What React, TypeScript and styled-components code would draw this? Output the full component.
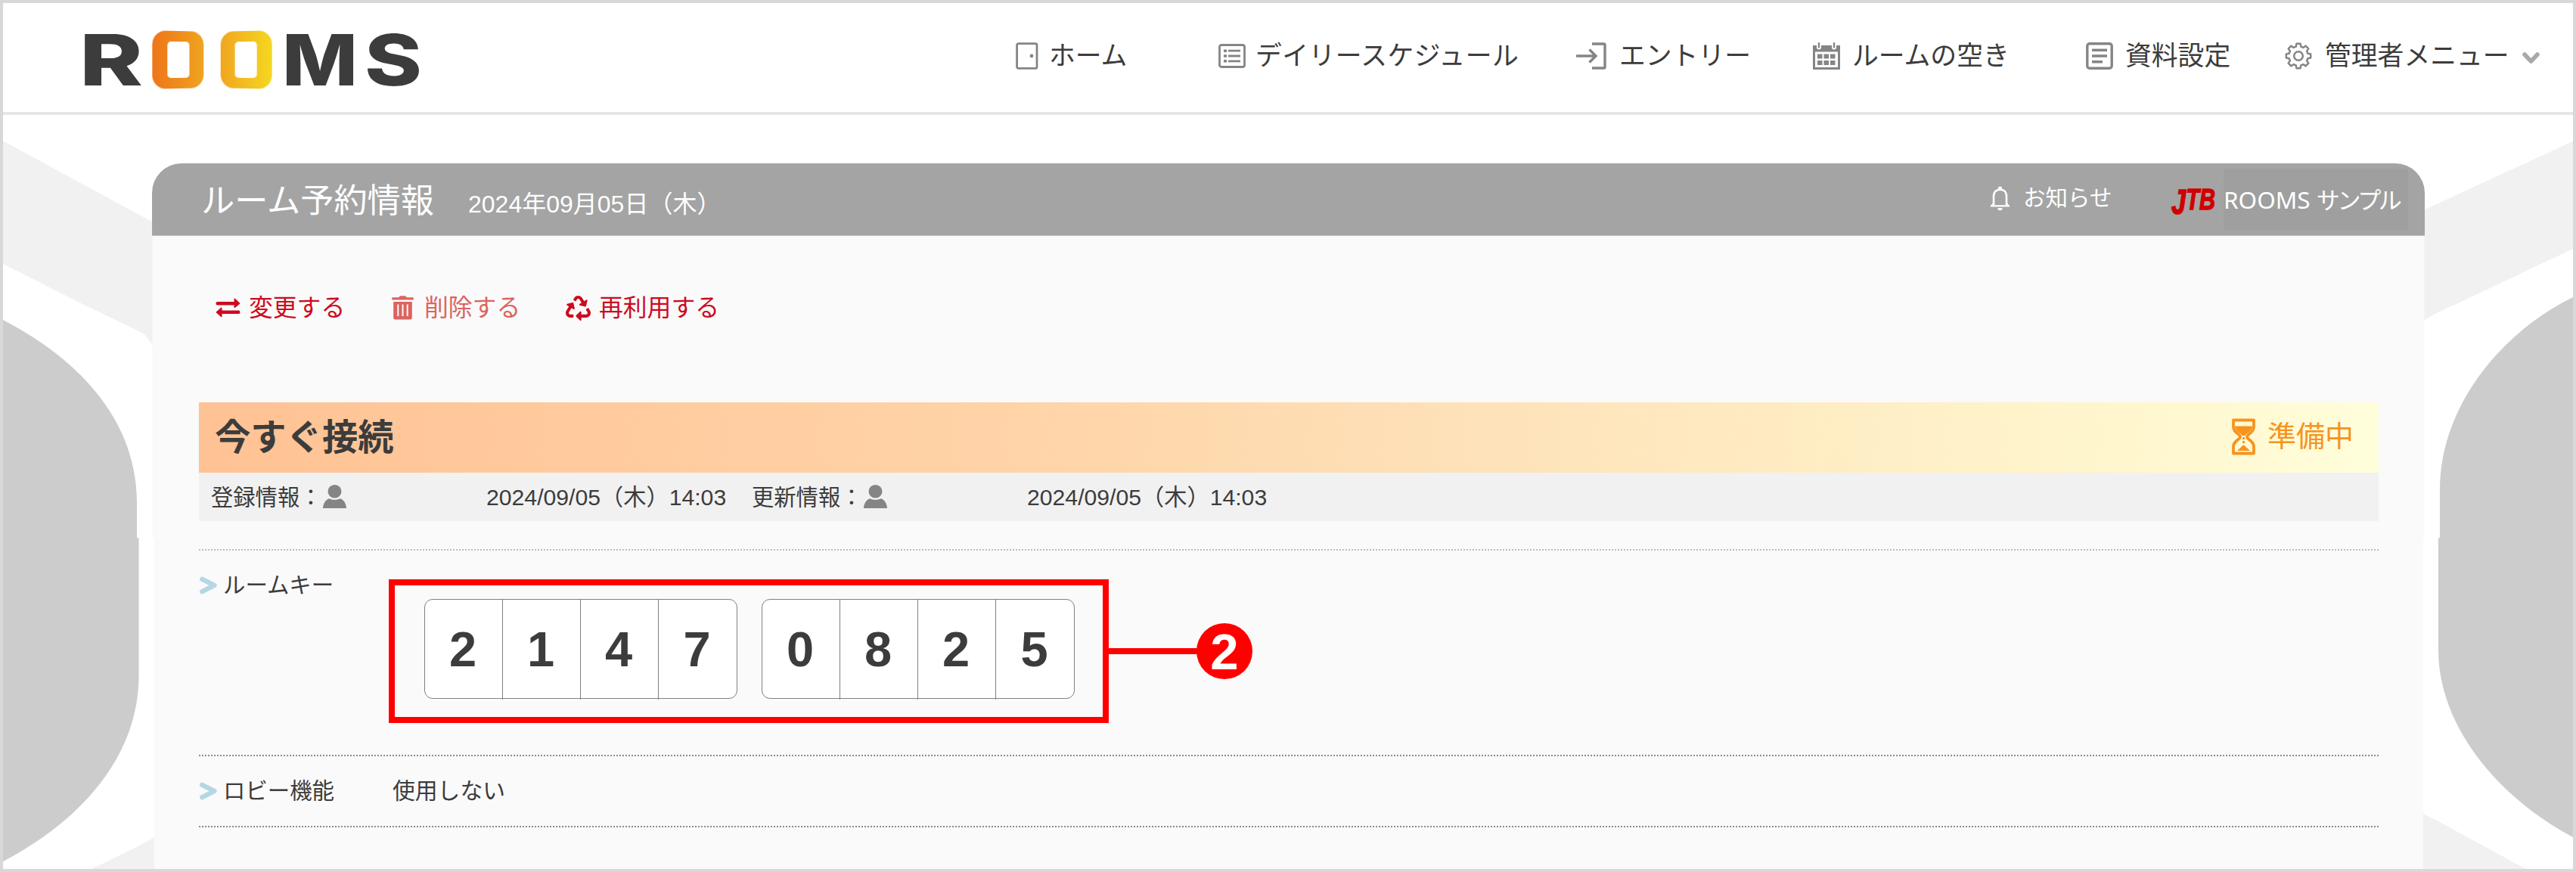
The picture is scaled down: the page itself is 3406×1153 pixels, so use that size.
import React from "react";
import styled, { createGlobalStyle } from "styled-components";
import { FaRecycle } from "react-icons/fa";

const Global = createGlobalStyle`
  *, *::before, *::after { box-sizing: border-box; }
  body {
    margin: 0;
    background: #fff;
    color: #3c3c3c;
    font-family: "Liberation Sans", "Noto Sans CJK JP", sans-serif;
  }
  svg { display: block; flex: none; }
`;

const Page = styled.div`
  position: relative;
  width: 3406px;
  height: 1153px;
  overflow: hidden;
  border: 4px solid #d8d8d8;
  background: #fff;
`;

const Backdrop = styled.svg`
  position: absolute;
  top: -4px;
  left: -4px;
`;

const Header = styled.header`
  position: relative;
  display: flex;
  align-items: center;
  height: 148px;
  padding: 0 0 0 107px;
  border-bottom: 4px solid #e6e6e6;
  background: #fff;
`;

const Logo = styled.div`
  display: flex;
  align-items: center;
  width: 450px;
  height: 80px;
  margin-top: 5px;
`;

const LogoType = styled.svg<{ $ml?: number }>`
  margin-left: ${(p) => p.$ml ?? 0}px;
  overflow: visible;
  font-family: "Inter", "Roboto", sans-serif;
  font-weight: 800;
  fill: #3c3c3c;
`;

const LogoDoor = styled.span<{ $from: string; $to: string; $ml: number; $tilt: number }>`
  flex: none;
  display: flex;
  width: 70px;
  height: 76px;
  margin-left: ${(p) => p.$ml}px;
  padding: 14px 20px;
  border-radius: 18px;
  background: linear-gradient(90deg, ${(p) => p.$from}, ${(p) => p.$to});
  transform: perspective(420px) rotateY(${(p) => p.$tilt}deg);

  &::after {
    content: "";
    flex: 1;
    border-radius: 5px;
    background: #fff;
  }
`;

const Nav = styled.nav`
  display: grid;
  grid-template-columns: 268px 473px 313px 361px 263px 360px;
  margin: 0 0 5px 782px;
`;

const NavLink = styled.a<{ $gap: number; $spacing?: number }>`
  display: flex;
  align-items: center;
  gap: ${(p) => p.$gap}px;
  height: 44px;
  font-size: 34.8px;
  letter-spacing: ${(p) => p.$spacing ?? 0}px;
  line-height: 44px;
  white-space: nowrap;
`;

const MenuArrow = styled.svg`
  margin-top: 6px;
`;

const Panel = styled.main`
  position: relative;
  width: 3005px;
  height: 933px;
  margin: 64px 0 0 197px;
`;

const PanelHead = styled.div`
  display: flex;
  align-items: center;
  height: 96px;
  padding-left: 65px;
  border-bottom: 1px solid #c4c4c4;
  border-radius: 39px 39px 0 0;
  background: #a4a4a4;
  color: #fff;
`;

const PanelTitle = styled.h1`
  width: 353px;
  margin: 0;
  padding-top: 4px;
  font-size: 44.2px;
  font-weight: 400;
  line-height: 60px;
  white-space: nowrap;
`;

const PanelDate = styled.span`
  padding-top: 13px;
  font-size: 32px;
  line-height: 44px;
  white-space: nowrap;
`;

const Notice = styled.a`
  display: flex;
  align-items: center;
  gap: 16px;
  width: 239px;
  margin-left: auto;
  padding-bottom: 3px;
  font-size: 29.5px;
  line-height: 40px;
`;

const Account = styled.a`
  display: flex;
  align-items: center;
  gap: 9px;
  margin-right: 22px;
`;

const AccountName = styled.span`
  width: 244px;
  height: 82px;
  background: #9f9f9f;
  font-family: "Noto Sans", "Noto Sans CJK JP", sans-serif;
  font-size: 31.5px;
  line-height: 79px;
  white-space: nowrap;
`;

const Kana = styled.span`
  font-family: "Noto Sans CJK JP", sans-serif;
  font-size: 31px;
  letter-spacing: -3.4px;
`;

const JtbLogo = styled.svg`
  overflow: visible;
  font-family: "Liberation Sans", sans-serif;
  font-style: italic;
  font-weight: 700;
  fill: #d00000;
  stroke: #d00000;
  stroke-width: 1.5px;
`;

const PanelBody = styled.div`
  padding: 72px 61px 0 62px;
`;

const Actions = styled.div`
  display: flex;
  align-items: center;
  height: 46px;
  padding-left: 22px;
`;

const Action = styled.a<{ $color: string; $gap: number; $width: number }>`
  display: flex;
  align-items: center;
  gap: ${(p) => p.$gap}px;
  width: ${(p) => p.$width}px;
  color: ${(p) => p.$color};
  font-size: 31.8px;
  line-height: 46px;
  white-space: nowrap;
`;

const MeetingBar = styled.div`
  display: flex;
  align-items: center;
  justify-content: space-between;
  height: 93px;
  margin-top: 102px;
  padding: 0 33px 0 21px;
  background: linear-gradient(92deg, #ffc294 0%, #ffd5a9 40%, #fee0b7 56%, #fff6cd 88%, #fffedb 100%);
`;

const MeetingTitle = styled.h2`
  margin: 0;
  font-size: 47.3px;
  font-weight: 700;
  line-height: 60px;
`;

const Status = styled.div`
  display: flex;
  align-items: center;
  gap: 16px;
  padding-bottom: 3px;
  color: #f7931e;
  font-size: 38px;
  line-height: 50px;
`;

const Meta = styled.div`
  display: flex;
  align-items: center;
  height: 64px;
  margin-bottom: 37px;
  padding: 1px 0 0 16px;
  background: #f1f1f1;
  font-size: 30.2px;
  line-height: 40px;
  white-space: nowrap;
`;

const MetaItem = styled.span<{ $width: number }>`
  display: flex;
  align-items: center;
  width: ${(p) => p.$width}px;
`;

const MetaLabel = styled.span`
  width: 148px;
  font-size: 29.3px;
`;

const MetaPerson = styled.span`
  width: 216px;
  padding-bottom: 3px;
`;

const Row = styled.section<{ $height: number; $line: string }>`
  display: flex;
  height: ${(p) => p.$height}px;
  border-top: 2px dotted ${(p) => p.$line};
`;

const RowLabel = styled.div`
  display: flex;
  align-items: center;
  gap: 8px;
  width: 256px;
  height: 44px;
  margin-top: 24px;
  padding-left: 1px;
  font-size: 29.4px;
  line-height: 44px;
  white-space: nowrap;
`;

const RowValue = styled.div`
  margin-top: 24px;
  font-size: 29.8px;
  line-height: 44px;
`;

const Callout = styled.div`
  display: flex;
  align-items: center;
  height: 190px;
  margin: 38px 0 0 -5px;
`;

const CalloutFrame = styled.div`
  display: flex;
  gap: 32px;
  width: 952px;
  height: 190px;
  padding: 18px 0 0 38.5px;
  border: 8px solid #f00;
`;

const CalloutLine = styled.span`
  width: 118px;
  height: 8px;
  background: #f00;
`;

const CalloutNumber = styled.span`
  width: 74px;
  height: 74px;
  margin-left: -2px;
  border-radius: 50%;
  background: #f00;
  color: #fff;
  font-size: 67px;
  font-weight: 700;
  line-height: 75px;
  text-align: center;
`;

const KeyGroup = styled.div`
  display: grid;
  grid-template-columns: repeat(4, 1fr);
  width: 414px;
  height: 132px;
  border: 1.5px solid #808080;
  border-radius: 11px;
  background: #fff;
`;

const KeyDigit = styled.span`
  padding-right: 1px;
  color: #3c3c3c;
  font-size: 65px;
  font-weight: 700;
  line-height: 132px;
  text-align: center;

  &:not(:last-child) { border-right: 1px solid #808080; }
`;

const DoorIcon = () => (
  <svg width="30" height="36" viewBox="0 0 30 36" fill="none" stroke="#858585" strokeWidth="2.8">
    <rect x="1.6" y="1.6" width="26.4" height="32.8" rx="2" />
    <circle cx="21" cy="18" r="2.4" fill="#858585" stroke="none" />
  </svg>
);

const ListIcon = () => (
  <svg width="36" height="32" viewBox="0 0 36 32" fill="none" stroke="#858585" strokeWidth="2.8">
    <rect x="1.5" y="1.5" width="33" height="29" rx="2.5" />
    <path d="M13 9.2h16M13 16h16M13 22.8h16" />
    <path d="M7 9.2h4M7 16h4M7 22.8h4" strokeWidth="3.4" />
  </svg>
);

const EnterIcon = () => (
  <svg width="40" height="36" viewBox="0 0 40 36" fill="none" stroke="#858585" strokeWidth="3.4">
    <path d="M21 2h15.5q1.5 0 1.5 1.5v29q0 1.500-1.500 1.500H21" />
    <path d="M0 18h25M17.500 9.500 26 18l-8.500 8.500" />
  </svg>
);

const CalendarIcon = () => (
  <svg width="36" height="36" viewBox="0 0 36 36" fill="#858585">
    <path d="M0 4h5v2.500a3 3 0 0 0 6 0V4h14v2.500a3 3 0 0 0 6 0V4h5v32H0zM3 12.500V33h30V12.500z" fillRule="evenodd" />
    <rect x="6.800" y="0" width="2.400" height="7.500" rx="1.200" />
    <rect x="26.800" y="0" width="2.400" height="7.500" rx="1.200" />
    {[6, 14.5, 23].map((x) =>
      [15.5, 24].map((y) => <rect key={`${x}-${y}`} x={x} y={y} width="6.500" height="6" />)
    )}
  </svg>
);

const DocumentIcon = () => (
  <svg width="36" height="36" viewBox="0 0 36 36" fill="none" stroke="#858585" strokeWidth="3.4">
    <rect x="1.800" y="1.800" width="32.400" height="32.400" rx="3" />
    <path d="M8 10.200h20M8 18h20M8 25.800h14" />
  </svg>
);

const gearPoints = () => {
  const teeth = 8;
  const pts: string[] = [];
  for (let i = 0; i < teeth; i++) {
    const base = (i * 360) / teeth - 90;
    const corners: [number, number][] = [
      [-15, 12.8],
      [-9, 16.4],
      [9, 16.4],
      [15, 12.8],
    ];
    corners.forEach(([a, r]) => {
      const t = ((base + a) * Math.PI) / 180;
      pts.push(`${(18 + r * Math.cos(t)).toFixed(2)},${(18 + r * Math.sin(t)).toFixed(2)}`);
    });
  }
  return pts.join(" ");
};

const GearIcon = () => (
  <svg width="36" height="36" viewBox="0 0 36 36" fill="none" stroke="#858585" strokeWidth="2.500" strokeLinejoin="round">
    <polygon points={gearPoints()} />
    <circle cx="18" cy="18" r="5.800" />
  </svg>
);

const ChevronDown = () => (
  <MenuArrow width="23" height="16" viewBox="0 0 23 16" fill="none" stroke="#a9a9a9" strokeWidth="5.500">
    <path d="M3 3 11.500 12 20 3" strokeLinecap="round" strokeLinejoin="round" />
  </MenuArrow>
);

const BellIcon = () => (
  <svg width="28" height="33" viewBox="0 0 28 33">
    <path d="M5 25V13.500C5 7.500 9 4.600 13.500 4.600s8.500 2.900 8.500 8.900V25" fill="none" stroke="#fff" strokeWidth="2.600" />
    <path d="M3.700 22.500 1 27h3zM23.300 22.500 26 27h-3z" fill="#fff" />
    <path d="M1 25.200h25v2.200H1z" fill="#fff" />
    <circle cx="13.500" cy="3" r="2.600" fill="#fff" />
    <path d="M10.300 29h6.400a3.200 3.200 0 0 1-6.400 0z" fill="#fff" />
  </svg>
);

const JtbMark = () => (
  <JtbLogo width="61" height="48" viewBox="0 0 61 48">
    <text x="1" y="43" textLength="58" lengthAdjust="spacingAndGlyphs">
      <tspan fontSize="46">J</tspan>
      <tspan fontSize="39" dy="-6">TB</tspan>
    </text>
  </JtbLogo>
);

const SwapIcon = () => (
  <svg width="33" height="26" viewBox="0 0 33 26" fill="currentColor">
    <path d="M2 5h22.500V1.500q0-1.500 1.300-.8l6.200 5.700q.8.700 0 1.400l-6.200 5.100q-1.300.7-1.300-.8V9.400H2Q.500 9.200.500 7.200T2 5z" />
    <path d="M31 16.600H8.500v-3.100q0-1.500-1.300-.8L1 18.200q-.8.700 0 1.400l6.200 5.500q1.300.7 1.300-.8V21H31q1.500-.2 1.500-2.200T31 16.600z" />
  </svg>
);

const TrashIcon = () => (
  <svg width="29" height="32" viewBox="0 0 29 32" fill="currentColor">
    <path d="M1 2.200h8.500Q9.800.3 11.500.3h6q1.700 0 2 1.900H28q.8 0 .8 1v1.500q0 .8-.8.800H1q-.8 0-.8-.8V3.200q0-1 .8-1z" />
    <path fillRule="evenodd" d="M2.200 8h24.600v21q0 2.500-2.500 2.500H4.700q-2.500 0-2.500-2.500zM7.300 11.500V27h2V11.500zM13.500 11.500V27h2V11.500zM19.700 11.500V27h2V11.500z" />
  </svg>
);

const HourglassIcon = () => (
  <svg width="31" height="49" viewBox="0 0 31 49" fill="none" stroke="#f7931e" strokeWidth="3.800">
    <path d="M2 2.500h27v9c0 8-9 9-9 13s9 5 9 13v9H2v-9c0-8 9-9 9-13s-9-5-9-13z" strokeLinejoin="round" />
    <path d="M4 10.500h23c0 8-8.500 8.500-9.500 12.500h-4C12.500 19 4 18.500 4 10.500zM15.500 35l8.500 8H7z" fill="#f7931e" stroke="none" />
    <path d="M15.500 25v10" strokeWidth="2.800" strokeDasharray="3 2" />
  </svg>
);

const PersonIcon = () => (
  <svg width="31" height="31" viewBox="0 0 31 31" fill="#858585">
    <ellipse cx="15.500" cy="8.800" rx="9" ry="8.800" />
    <path d="M0 31c.5-7 3.500-11 8-12.800q7 3.600 15 0C27.500 20 30.500 24 31 31z" />
  </svg>
);

const RowArrow = () => (
  <svg width="23" height="24" viewBox="0 0 23 24" fill="none" stroke="#b5d7e3" strokeWidth="6.400" strokeLinecap="round" strokeLinejoin="round">
    <path d="M3.300 3.800 19.500 12 3.300 20.200" />
  </svg>
);

const navItems = [
  { label: "ホーム", icon: <DoorIcon />, gap: 14 },
  { label: "デイリースケジュール", icon: <ListIcon />, gap: 13, spacing: 0.45 },
  { label: "エントリー", icon: <EnterIcon />, gap: 17 },
  { label: "ルームの空き", icon: <CalendarIcon />, gap: 16 },
  { label: "資料設定", icon: <DocumentIcon />, gap: 16 },
  { label: "管理者メニュー", icon: <GearIcon />, gap: 17, menu: true },
];

const keyGroups = ["2147", "0825"];

export default function App() {
  return (
    <>
      <Global />
      <Page>
        <Backdrop width="3406" height="1153" viewBox="0 0 3406 1153">
          <g fill="#f1f1f1">
            <path d="M0 184 230 309V472L201 455 190 441 105 400 0 347z" />
            <path d="M3406 185 3180 289V440L3206 423Q3225 411 3250 401L3406 327z" />
            <path d="M113 1153 160 1130Q190 1116 230 1092V1153z" />
            <path d="M3180 1062Q3205 1077 3222 1085L3347 1153H3180z" />
          </g>
          <g fill="#ccc">
            <path d="M0 421C100 472 181 552 181 666V711H0z" />
            <path d="M0 711H183.500V893C183.500 1005 100 1090 0 1141z" />
            <path d="M3406 391C3310 436 3226 536 3226 647V711H3406z" />
            <path d="M3406 711H3224V859C3224 965 3310 1060 3406 1109z" />
          </g>
          <path d="M201.500 262H3205.500V711H3204V1153H204V711H201.500z" fill="#fafafa" />
        </Backdrop>

        <Header>
          <Logo>
            <LogoType width="76" height="70">
              <text x="-6" y="69" fontSize="94" textLength="84" lengthAdjust="spacingAndGlyphs">R</text>
            </LogoType>
            <LogoDoor $from="#ee7519" $to="#f0a41f" $ml={14} $tilt={14} />
            <LogoDoor $from="#f1a520" $to="#f5d720" $ml={19} $tilt={-14} />
            <LogoType width="176" height="70" $ml={20}>
              <text x="-7" y="69" fontSize="94" textLength="100" lengthAdjust="spacingAndGlyphs">M</text>
              <text x="102" y="69" fontSize="94" textLength="76" lengthAdjust="spacingAndGlyphs">S</text>
            </LogoType>
          </Logo>
          <Nav>
            {navItems.map((item) => (
              <NavLink key={item.label} $gap={item.gap} $spacing={item.spacing}>
                {item.icon}
                {item.label}
                {item.menu && <ChevronDown />}
              </NavLink>
            ))}
          </Nav>
        </Header>

        <Panel>
          <PanelHead>
            <PanelTitle>ルーム予約情報</PanelTitle>
            <PanelDate>2024年09月05日（木）</PanelDate>
            <Notice>
              <BellIcon />
              お知らせ
            </Notice>
            <Account>
              <JtbMark />
              <AccountName>
                ROOMS <Kana>サンプル</Kana>
              </AccountName>
            </Account>
          </PanelHead>

          <PanelBody>
            <Actions>
              <Action $color="#cd0a1e" $gap={11} $width={233}>
                <SwapIcon />
                変更する
              </Action>
              <Action $color="#db6460" $gap={14} $width={230}>
                <TrashIcon />
                削除する
              </Action>
              <Action $color="#cd0a1e" $gap={11} $width={260}>
                <FaRecycle size={33} />
                再利用する
              </Action>
            </Actions>

            <MeetingBar>
              <MeetingTitle>今すぐ接続</MeetingTitle>
              <Status>
                <HourglassIcon />
                準備中
              </Status>
            </MeetingBar>
            <Meta>
              <MetaItem $width={715}>
                <MetaLabel>登録情報：</MetaLabel>
                <MetaPerson>
                  <PersonIcon />
                </MetaPerson>
                2024/09/05（木）14:03
              </MetaItem>
              <MetaItem $width={700}>
                <MetaLabel>更新情報：</MetaLabel>
                <MetaPerson>
                  <PersonIcon />
                </MetaPerson>
                2024/09/05（木）14:03
              </MetaItem>
            </Meta>

            <Row $height={272} $line="#bdbdbd">
              <RowLabel>
                <RowArrow />
                ルームキー
              </RowLabel>
              <Callout>
                <CalloutFrame>
                  {keyGroups.map((group) => (
                    <KeyGroup key={group}>
                      {group.split("").map((digit, i) => (
                        <KeyDigit key={i}>{digit}</KeyDigit>
                      ))}
                    </KeyGroup>
                  ))}
                </CalloutFrame>
                <CalloutLine />
                <CalloutNumber>2</CalloutNumber>
              </Callout>
            </Row>
            <Row $height={94} $line="#8c8c8c">
              <RowLabel>
                <RowArrow />
                ロビー機能
              </RowLabel>
              <RowValue>使用しない</RowValue>
            </Row>
            <Row $height={40} $line="#8c8c8c" />
          </PanelBody>
        </Panel>
      </Page>
    </>
  );
}
